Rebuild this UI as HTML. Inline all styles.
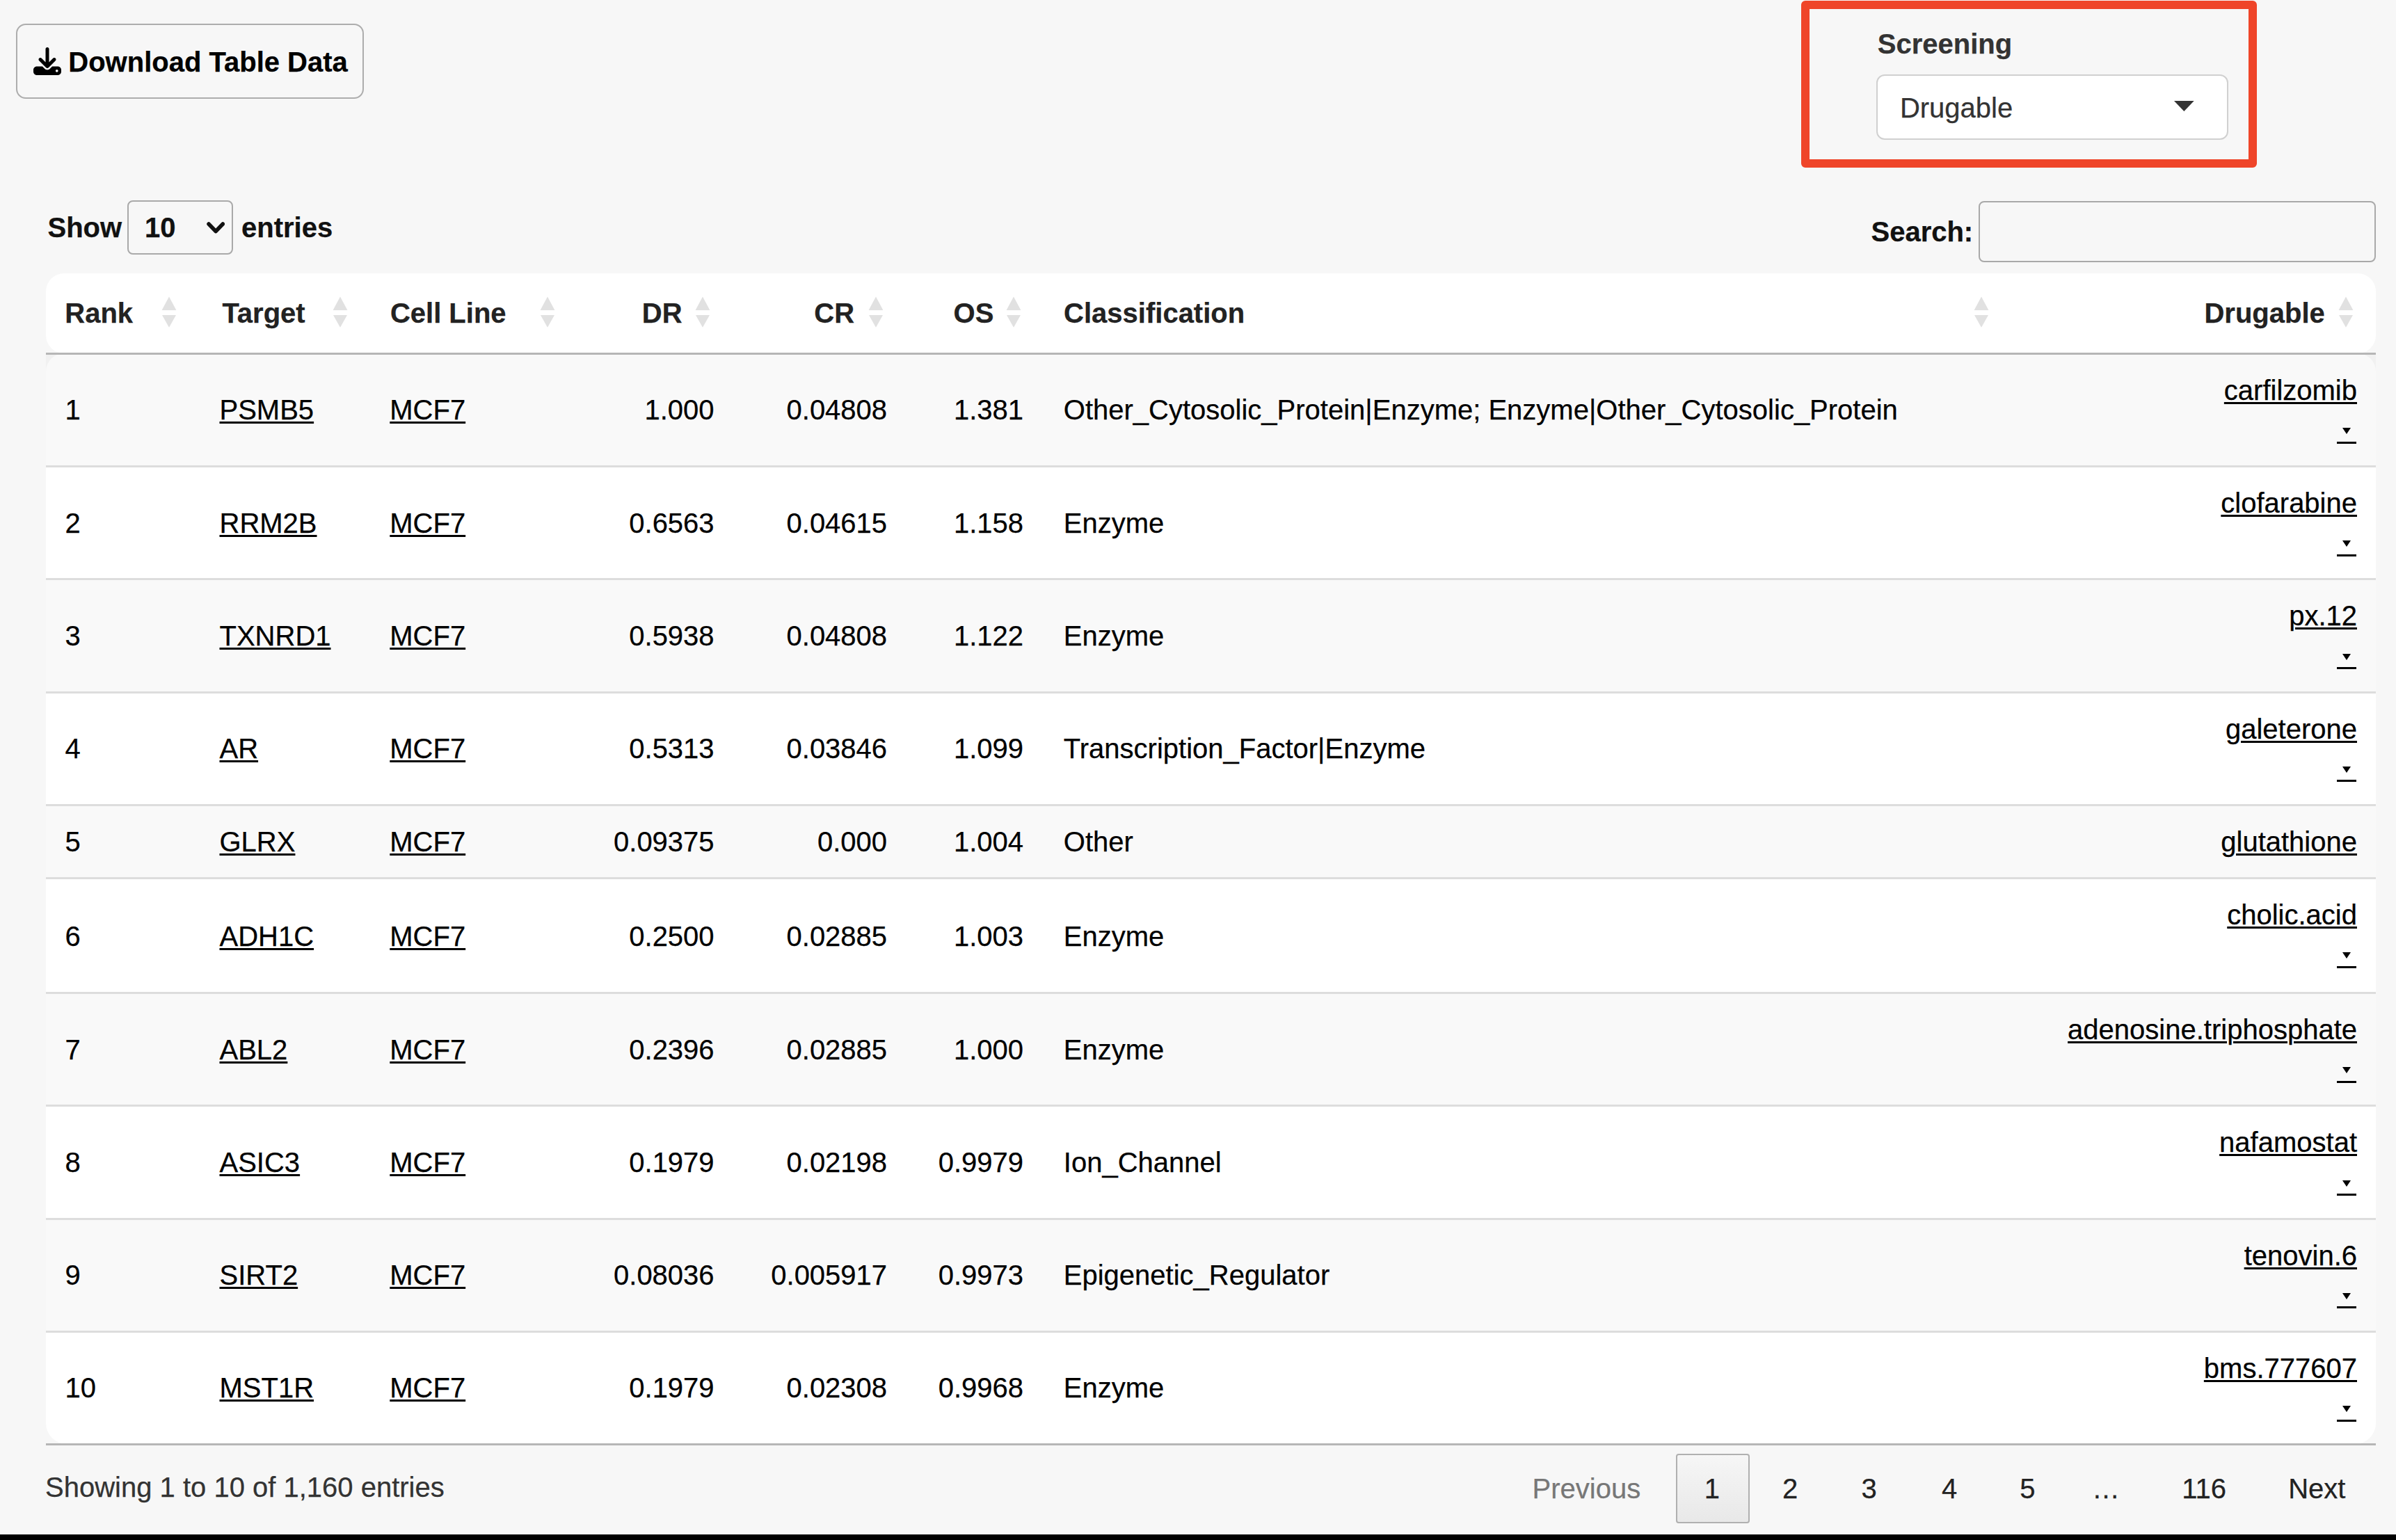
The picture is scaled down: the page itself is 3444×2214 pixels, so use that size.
<!DOCTYPE html>
<html><head><meta charset="utf-8"><style>
html,body{margin:0;padding:0;}
body{width:3444px;height:2214px;overflow:hidden;position:relative;background:#f7f7f7;font-family:"Liberation Sans",sans-serif;}
.t{position:absolute;font-size:40px;line-height:40px;white-space:pre;-webkit-text-stroke:0.25px currentColor;}
.b{font-weight:bold;}
.u{text-decoration:underline;text-decoration-thickness:3px;text-underline-offset:3px;}
</style></head><body>
<div style="position:absolute;left:22.9px;top:34.4px;width:500.2px;height:107.5px;box-sizing:border-box;border:2.8px solid #adadad;border-radius:14px;"></div>
<svg style="position:absolute;left:48.2px;top:68.2px;width:40px;height:40px" viewBox="0 0 512 512"><path fill="#000" d="M288 32c0-17.7-14.3-32-32-32s-32 14.3-32 32V274.7l-73.4-73.4c-12.5-12.5-32.8-12.5-45.3 0s-12.5 32.8 0 45.3l128 128c12.5 12.5 32.8 12.5 45.3 0l128-128c12.5-12.5 12.5-32.8 0-45.3s-32.8-12.5-45.3 0L288 274.7V32zM64 352c-35.3 0-64 28.7-64 64v32c0 35.3 28.7 64 64 64H448c35.3 0 64-28.7 64-64V416c0-35.3-28.7-64-64-64H346.5l-45.3 45.3c-25 25-65.5 25-90.5 0L165.5 352H64zm368 56a24 24 0 1 1 0 48 24 24 0 1 1 0-48z"/></svg>
<div class="t b" style="top:68.8px;color:#000;left:98.3px;">Download Table Data</div>
<div style="position:absolute;left:2589.0px;top:0.5px;width:655.3px;height:240.3px;box-sizing:border-box;border:12.8px solid #ef4529;border-radius:6px;"></div>
<div class="t b" style="top:43.4px;color:#333;left:2698.8px;">Screening</div>
<div style="position:absolute;left:2696.5px;top:106.6px;width:506.9px;height:94.4px;box-sizing:border-box;background:#fff;border:2.8px solid #d0d0d0;border-radius:12px;"></div>
<div class="t" style="top:134.6px;color:#333;left:2730.9px;">Drugable</div>
<svg style="position:absolute;left:3125px;top:145.2px;width:28.7px;height:15px" viewBox="0 0 28.7 15"><path fill="#333" d="M0 0H28.7L14.35 15Z"/></svg>
<div class="t b" style="top:307.4px;color:#111;left:68.5px;">Show</div>
<div style="position:absolute;left:183.0px;top:287.8px;width:151.6px;height:78.4px;box-sizing:border-box;border:2.8px solid #a9a9a9;border-radius:8px;"></div>
<div class="t b" style="top:307.4px;color:#111;left:208.1px;">10</div>
<svg style="position:absolute;left:297px;top:319px;width:26.3px;height:17px" viewBox="0 0 26.3 17"><path fill="none" stroke="#111" stroke-width="5.5" stroke-linecap="round" stroke-linejoin="round" d="M3 3L13.15 13.5L23.3 3"/></svg>
<div class="t b" style="top:307.4px;color:#111;left:347.0px;">entries</div>
<div class="t b" style="top:313.2px;color:#111;right:607.8px;text-align:right;">Search:</div>
<div style="position:absolute;left:2843.9px;top:288.7px;width:571.3px;height:88.6px;box-sizing:border-box;border:2.8px solid #a9a9a9;border-radius:8px;"></div>
<div style="position:absolute;left:66.0px;top:392.8px;width:3349.0px;height:115.5px;background:#fff;border-radius:26px;"></div>
<div style="position:absolute;left:66.0px;top:508.3px;width:30.0px;height:31.7px;background:#f1f1f1;"></div>
<div style="position:absolute;left:3385.0px;top:508.3px;width:30.0px;height:31.7px;background:#f1f1f1;"></div>
<div style="position:absolute;left:66.0px;top:508.3px;width:3349.0px;height:162.1px;background:#f9f9f9;border-radius:26px 26px 0 0;"></div>
<div style="position:absolute;left:66.0px;top:670.4px;width:3349.0px;height:162.2px;background:#fff;"></div>
<div style="position:absolute;left:66.0px;top:832.6px;width:3349.0px;height:162.4px;background:#f9f9f9;"></div>
<div style="position:absolute;left:66.0px;top:995.0px;width:3349.0px;height:162.4px;background:#fff;"></div>
<div style="position:absolute;left:66.0px;top:1157.4px;width:3349.0px;height:105.1px;background:#f9f9f9;"></div>
<div style="position:absolute;left:66.0px;top:1262.5px;width:3349.0px;height:165.0px;background:#fff;"></div>
<div style="position:absolute;left:66.0px;top:1427.5px;width:3349.0px;height:162.2px;background:#f9f9f9;"></div>
<div style="position:absolute;left:66.0px;top:1589.7px;width:3349.0px;height:162.4px;background:#fff;"></div>
<div style="position:absolute;left:66.0px;top:1752.1px;width:3349.0px;height:162.1px;background:#f9f9f9;"></div>
<div style="position:absolute;left:66.0px;top:1914.2px;width:3349.0px;height:162.3px;background:#fff;border-radius:0 0 30px 30px;"></div>
<div style="position:absolute;left:66.0px;top:506.8px;width:3349.0px;height:3.0px;background:#b6b6b6;"></div>
<div style="position:absolute;left:66.0px;top:668.9px;width:3349.0px;height:3.0px;background:#dddddd;"></div>
<div style="position:absolute;left:66.0px;top:831.1px;width:3349.0px;height:3.0px;background:#dddddd;"></div>
<div style="position:absolute;left:66.0px;top:993.5px;width:3349.0px;height:3.0px;background:#dddddd;"></div>
<div style="position:absolute;left:66.0px;top:1155.9px;width:3349.0px;height:3.0px;background:#dddddd;"></div>
<div style="position:absolute;left:66.0px;top:1261.0px;width:3349.0px;height:3.0px;background:#dddddd;"></div>
<div style="position:absolute;left:66.0px;top:1426.0px;width:3349.0px;height:3.0px;background:#dddddd;"></div>
<div style="position:absolute;left:66.0px;top:1588.2px;width:3349.0px;height:3.0px;background:#dddddd;"></div>
<div style="position:absolute;left:66.0px;top:1750.6px;width:3349.0px;height:3.0px;background:#dddddd;"></div>
<div style="position:absolute;left:66.0px;top:1912.7px;width:3349.0px;height:3.0px;background:#dddddd;"></div>
<div style="position:absolute;left:66.0px;top:2075.0px;width:3349.0px;height:3.0px;background:#b6b6b6;"></div>
<div class="t b" style="top:430.3px;color:#222;left:93.3px;">Rank</div>
<div class="t b" style="top:430.3px;color:#222;left:319.4px;">Target</div>
<div class="t b" style="top:430.3px;color:#222;left:560.9px;">Cell Line</div>
<div class="t b" style="top:430.3px;color:#222;right:2463.4px;text-align:right;">DR</div>
<div class="t b" style="top:430.3px;color:#222;right:2215.9px;text-align:right;">CR</div>
<div class="t b" style="top:430.3px;color:#222;right:2015.6px;text-align:right;">OS</div>
<div class="t b" style="top:430.3px;color:#222;left:1529.1px;">Classification</div>
<div class="t b" style="top:430.3px;color:#222;right:102.2px;text-align:right;">Drugable</div>
<svg style="position:absolute;left:232.4px;top:426px;width:22px;height:45px" viewBox="0 0 22 45"><path fill="#e1e1e1" d="M0.6 20.1H21.4L11 0.6Z M1 27.1H21L11 44.7Z"/></svg>
<svg style="position:absolute;left:478.0px;top:426px;width:22px;height:45px" viewBox="0 0 22 45"><path fill="#e1e1e1" d="M0.6 20.1H21.4L11 0.6Z M1 27.1H21L11 44.7Z"/></svg>
<svg style="position:absolute;left:776.0px;top:426px;width:22px;height:45px" viewBox="0 0 22 45"><path fill="#e1e1e1" d="M0.6 20.1H21.4L11 0.6Z M1 27.1H21L11 44.7Z"/></svg>
<svg style="position:absolute;left:999.3px;top:426px;width:22px;height:45px" viewBox="0 0 22 45"><path fill="#e1e1e1" d="M0.6 20.1H21.4L11 0.6Z M1 27.1H21L11 44.7Z"/></svg>
<svg style="position:absolute;left:1248.0px;top:426px;width:22px;height:45px" viewBox="0 0 22 45"><path fill="#e1e1e1" d="M0.6 20.1H21.4L11 0.6Z M1 27.1H21L11 44.7Z"/></svg>
<svg style="position:absolute;left:1446.0px;top:426px;width:22px;height:45px" viewBox="0 0 22 45"><path fill="#e1e1e1" d="M0.6 20.1H21.4L11 0.6Z M1 27.1H21L11 44.7Z"/></svg>
<svg style="position:absolute;left:2836.5px;top:426px;width:22px;height:45px" viewBox="0 0 22 45"><path fill="#e1e1e1" d="M0.6 20.1H21.4L11 0.6Z M1 27.1H21L11 44.7Z"/></svg>
<svg style="position:absolute;left:3360.5px;top:426px;width:22px;height:45px" viewBox="0 0 22 45"><path fill="#e1e1e1" d="M0.6 20.1H21.4L11 0.6Z M1 27.1H21L11 44.7Z"/></svg>
<div class="t" style="top:569.4px;color:#000;left:93.4px;">1</div>
<div class="t u" style="top:569.4px;color:#000;left:315.5px;">PSMB5</div>
<div class="t u" style="top:569.4px;color:#000;left:560.3px;">MCF7</div>
<div class="t" style="top:569.4px;color:#000;right:2417.4px;text-align:right;">1.000</div>
<div class="t" style="top:569.4px;color:#000;right:2168.9px;text-align:right;">0.04808</div>
<div class="t" style="top:569.4px;color:#000;right:1973.0px;text-align:right;">1.381</div>
<div class="t" style="top:569.4px;color:#000;left:1528.8px;">Other_Cytosolic_Protein|Enzyme; Enzyme|Other_Cytosolic_Protein</div>
<div class="t u" style="top:540.8px;color:#000;right:56.0px;text-align:right;">carfilzomib</div>
<div style="position:absolute;left:3358.6px;top:634.6px;width:28.8px;height:3.0px;background:#000;"></div>
<svg style="position:absolute;left:3366.5px;top:615.2px;width:12px;height:9px" viewBox="0 0 12 9"><path fill="#000" d="M0 0H12L6 9Z"/></svg>
<div class="t" style="top:731.5px;color:#000;left:93.4px;">2</div>
<div class="t u" style="top:731.5px;color:#000;left:315.5px;">RRM2B</div>
<div class="t u" style="top:731.5px;color:#000;left:560.3px;">MCF7</div>
<div class="t" style="top:731.5px;color:#000;right:2417.4px;text-align:right;">0.6563</div>
<div class="t" style="top:731.5px;color:#000;right:2168.9px;text-align:right;">0.04615</div>
<div class="t" style="top:731.5px;color:#000;right:1973.0px;text-align:right;">1.158</div>
<div class="t" style="top:731.5px;color:#000;left:1528.8px;">Enzyme</div>
<div class="t u" style="top:702.9px;color:#000;right:56.0px;text-align:right;">clofarabine</div>
<div style="position:absolute;left:3358.6px;top:796.7px;width:28.8px;height:3.0px;background:#000;"></div>
<svg style="position:absolute;left:3366.5px;top:777.3px;width:12px;height:9px" viewBox="0 0 12 9"><path fill="#000" d="M0 0H12L6 9Z"/></svg>
<div class="t" style="top:893.8px;color:#000;left:93.4px;">3</div>
<div class="t u" style="top:893.8px;color:#000;left:315.5px;">TXNRD1</div>
<div class="t u" style="top:893.8px;color:#000;left:560.3px;">MCF7</div>
<div class="t" style="top:893.8px;color:#000;right:2417.4px;text-align:right;">0.5938</div>
<div class="t" style="top:893.8px;color:#000;right:2168.9px;text-align:right;">0.04808</div>
<div class="t" style="top:893.8px;color:#000;right:1973.0px;text-align:right;">1.122</div>
<div class="t" style="top:893.8px;color:#000;left:1528.8px;">Enzyme</div>
<div class="t u" style="top:865.1px;color:#000;right:56.0px;text-align:right;">px.12</div>
<div style="position:absolute;left:3358.6px;top:958.9px;width:28.8px;height:3.0px;background:#000;"></div>
<svg style="position:absolute;left:3366.5px;top:939.5px;width:12px;height:9px" viewBox="0 0 12 9"><path fill="#000" d="M0 0H12L6 9Z"/></svg>
<div class="t" style="top:1056.2px;color:#000;left:93.4px;">4</div>
<div class="t u" style="top:1056.2px;color:#000;left:315.5px;">AR</div>
<div class="t u" style="top:1056.2px;color:#000;left:560.3px;">MCF7</div>
<div class="t" style="top:1056.2px;color:#000;right:2417.4px;text-align:right;">0.5313</div>
<div class="t" style="top:1056.2px;color:#000;right:2168.9px;text-align:right;">0.03846</div>
<div class="t" style="top:1056.2px;color:#000;right:1973.0px;text-align:right;">1.099</div>
<div class="t" style="top:1056.2px;color:#000;left:1528.8px;">Transcription_Factor|Enzyme</div>
<div class="t u" style="top:1027.5px;color:#000;right:56.0px;text-align:right;">galeterone</div>
<div style="position:absolute;left:3358.6px;top:1121.3px;width:28.8px;height:3.0px;background:#000;"></div>
<svg style="position:absolute;left:3366.5px;top:1101.9px;width:12px;height:9px" viewBox="0 0 12 9"><path fill="#000" d="M0 0H12L6 9Z"/></svg>
<div class="t" style="top:1190.0px;color:#000;left:93.4px;">5</div>
<div class="t u" style="top:1190.0px;color:#000;left:315.5px;">GLRX</div>
<div class="t u" style="top:1190.0px;color:#000;left:560.3px;">MCF7</div>
<div class="t" style="top:1190.0px;color:#000;right:2417.4px;text-align:right;">0.09375</div>
<div class="t" style="top:1190.0px;color:#000;right:2168.9px;text-align:right;">0.000</div>
<div class="t" style="top:1190.0px;color:#000;right:1973.0px;text-align:right;">1.004</div>
<div class="t" style="top:1190.0px;color:#000;left:1528.8px;">Other</div>
<div class="t u" style="top:1190.0px;color:#000;right:56.0px;text-align:right;">glutathione</div>
<div class="t" style="top:1326.0px;color:#000;left:93.4px;">6</div>
<div class="t u" style="top:1326.0px;color:#000;left:315.5px;">ADH1C</div>
<div class="t u" style="top:1326.0px;color:#000;left:560.3px;">MCF7</div>
<div class="t" style="top:1326.0px;color:#000;right:2417.4px;text-align:right;">0.2500</div>
<div class="t" style="top:1326.0px;color:#000;right:2168.9px;text-align:right;">0.02885</div>
<div class="t" style="top:1326.0px;color:#000;right:1973.0px;text-align:right;">1.003</div>
<div class="t" style="top:1326.0px;color:#000;left:1528.8px;">Enzyme</div>
<div class="t u" style="top:1295.0px;color:#000;right:56.0px;text-align:right;">cholic.acid</div>
<div style="position:absolute;left:3358.6px;top:1388.8px;width:28.8px;height:3.0px;background:#000;"></div>
<svg style="position:absolute;left:3366.5px;top:1369.4px;width:12px;height:9px" viewBox="0 0 12 9"><path fill="#000" d="M0 0H12L6 9Z"/></svg>
<div class="t" style="top:1488.6px;color:#000;left:93.4px;">7</div>
<div class="t u" style="top:1488.6px;color:#000;left:315.5px;">ABL2</div>
<div class="t u" style="top:1488.6px;color:#000;left:560.3px;">MCF7</div>
<div class="t" style="top:1488.6px;color:#000;right:2417.4px;text-align:right;">0.2396</div>
<div class="t" style="top:1488.6px;color:#000;right:2168.9px;text-align:right;">0.02885</div>
<div class="t" style="top:1488.6px;color:#000;right:1973.0px;text-align:right;">1.000</div>
<div class="t" style="top:1488.6px;color:#000;left:1528.8px;">Enzyme</div>
<div class="t u" style="top:1460.0px;color:#000;right:56.0px;text-align:right;">adenosine.triphosphate</div>
<div style="position:absolute;left:3358.6px;top:1553.8px;width:28.8px;height:3.0px;background:#000;"></div>
<svg style="position:absolute;left:3366.5px;top:1534.4px;width:12px;height:9px" viewBox="0 0 12 9"><path fill="#000" d="M0 0H12L6 9Z"/></svg>
<div class="t" style="top:1650.9px;color:#000;left:93.4px;">8</div>
<div class="t u" style="top:1650.9px;color:#000;left:315.5px;">ASIC3</div>
<div class="t u" style="top:1650.9px;color:#000;left:560.3px;">MCF7</div>
<div class="t" style="top:1650.9px;color:#000;right:2417.4px;text-align:right;">0.1979</div>
<div class="t" style="top:1650.9px;color:#000;right:2168.9px;text-align:right;">0.02198</div>
<div class="t" style="top:1650.9px;color:#000;right:1973.0px;text-align:right;">0.9979</div>
<div class="t" style="top:1650.9px;color:#000;left:1528.8px;">Ion_Channel</div>
<div class="t u" style="top:1622.2px;color:#000;right:56.0px;text-align:right;">nafamostat</div>
<div style="position:absolute;left:3358.6px;top:1716.0px;width:28.8px;height:3.0px;background:#000;"></div>
<svg style="position:absolute;left:3366.5px;top:1696.6px;width:12px;height:9px" viewBox="0 0 12 9"><path fill="#000" d="M0 0H12L6 9Z"/></svg>
<div class="t" style="top:1813.2px;color:#000;left:93.4px;">9</div>
<div class="t u" style="top:1813.2px;color:#000;left:315.5px;">SIRT2</div>
<div class="t u" style="top:1813.2px;color:#000;left:560.3px;">MCF7</div>
<div class="t" style="top:1813.2px;color:#000;right:2417.4px;text-align:right;">0.08036</div>
<div class="t" style="top:1813.2px;color:#000;right:2168.9px;text-align:right;">0.005917</div>
<div class="t" style="top:1813.2px;color:#000;right:1973.0px;text-align:right;">0.9973</div>
<div class="t" style="top:1813.2px;color:#000;left:1528.8px;">Epigenetic_Regulator</div>
<div class="t u" style="top:1784.6px;color:#000;right:56.0px;text-align:right;">tenovin.6</div>
<div style="position:absolute;left:3358.6px;top:1878.4px;width:28.8px;height:3.0px;background:#000;"></div>
<svg style="position:absolute;left:3366.5px;top:1859.0px;width:12px;height:9px" viewBox="0 0 12 9"><path fill="#000" d="M0 0H12L6 9Z"/></svg>
<div class="t" style="top:1975.3px;color:#000;left:93.4px;">10</div>
<div class="t u" style="top:1975.3px;color:#000;left:315.5px;">MST1R</div>
<div class="t u" style="top:1975.3px;color:#000;left:560.3px;">MCF7</div>
<div class="t" style="top:1975.3px;color:#000;right:2417.4px;text-align:right;">0.1979</div>
<div class="t" style="top:1975.3px;color:#000;right:2168.9px;text-align:right;">0.02308</div>
<div class="t" style="top:1975.3px;color:#000;right:1973.0px;text-align:right;">0.9968</div>
<div class="t" style="top:1975.3px;color:#000;left:1528.8px;">Enzyme</div>
<div class="t u" style="top:1946.7px;color:#000;right:56.0px;text-align:right;">bms.777607</div>
<div style="position:absolute;left:3358.6px;top:2040.5px;width:28.8px;height:3.0px;background:#000;"></div>
<svg style="position:absolute;left:3366.5px;top:2021.1px;width:12px;height:9px" viewBox="0 0 12 9"><path fill="#000" d="M0 0H12L6 9Z"/></svg>
<div class="t" style="top:2118.4px;color:#333;left:65.0px;">Showing 1 to 10 of 1,160 entries</div>
<div style="position:absolute;left:2408.7px;top:2090.0px;width:106.3px;height:100.4px;box-sizing:border-box;border:2.8px solid #b0b0b0;border-radius:4px;background:linear-gradient(#f6f6f6,#e8e8e8);"></div>
<div class="t" style="top:2119.8px;color:#777;left:2202.5px;">Previous</div>
<div class="t" style="top:2119.8px;color:#222;left:2449.7px;">1</div>
<div class="t" style="top:2119.8px;color:#222;left:2561.9px;">2</div>
<div class="t" style="top:2119.8px;color:#222;left:2675.5px;">3</div>
<div class="t" style="top:2119.8px;color:#222;left:2790.9px;">4</div>
<div class="t" style="top:2119.8px;color:#222;left:2903.2px;">5</div>
<div class="t" style="top:2119.8px;color:#222;left:3007.0px;">…</div>
<div class="t" style="top:2119.8px;color:#222;left:3136.2px;">116</div>
<div class="t" style="top:2119.8px;color:#222;left:3289.2px;">Next</div>
<div style="position:absolute;left:0.0px;top:2204.8px;width:3444.0px;height:1.0px;background:#fff;"></div>
<div style="position:absolute;left:0.0px;top:2205.8px;width:3444.0px;height:8.2px;background:#000;"></div>
</body></html>
